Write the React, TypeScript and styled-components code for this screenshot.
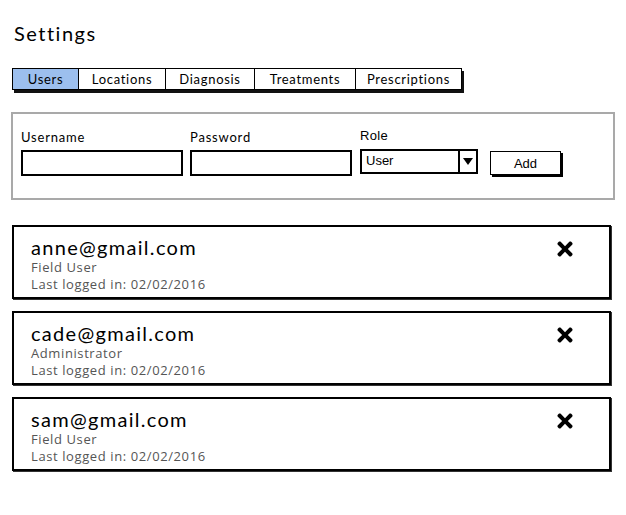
import React from "react";
import styled, { createGlobalStyle } from "styled-components";
import { FaTimes } from "react-icons/fa";

const Global = createGlobalStyle`
  html, body { margin: 0; padding: 0; background: #fff; }
  body { font-family: "Lato", "Liberation Sans", sans-serif; color: #000; }
`;

const Page = styled.div`
  width: 626px;
  height: 515px;
  box-sizing: border-box;
  padding: 21px 12px 0 12px;
  display: flex;
  flex-direction: column;
`;

const Title = styled.h1`
  margin: 0 0 0 2px;
  font-size: 20px;
  line-height: 24px;
  font-weight: 400;
  letter-spacing: 1.5px;
`;

const TabBar = styled.div`
  margin-top: 23px;
  display: flex;
  align-self: flex-start;
  border: 1.5px solid #000;
  box-shadow: 2px 3px 0 #111;
`;

const Tab = styled.div<{ $active?: boolean; $w: number }>`
  width: ${(p) => p.$w}px;
  height: 20px;
  box-sizing: border-box;
  display: flex;
  align-items: center;
  justify-content: center;
  font-size: 13px;
  letter-spacing: 0.7px;
  background: ${(p) => (p.$active ? "#9cbfee" : "#fff")};
  border-left: ${(p) => (p.$active ? "none" : "1.5px solid #000")};
`;

const Panel = styled.div`
  margin-top: 22px;
  margin-left: -1px;
  width: 604px;
  height: 88px;
  box-sizing: border-box;
  border: 2px solid #a9a9a9;
  padding: 14px 0 0 8px;
  display: flex;
  align-items: flex-end;
  gap: 7px;
`;

const Field = styled.div<{ $pb?: number }>`
  display: flex;
  flex-direction: column;
  gap: 5px;
  padding-bottom: ${(p) => p.$pb ?? 22}px;
`;

const Label = styled.label<{ $sans?: boolean }>`
  font-size: 13px;
  line-height: 16px;
  letter-spacing: ${(p) => (p.$sans ? "0.3px" : "0.8px")};
  margin-left: ${(p) => (p.$sans ? "1px" : "0")};
  font-family: ${(p) => (p.$sans ? '"Liberation Sans", Arial, sans-serif' : '"Lato", sans-serif')};
`;

const Input = styled.div`
  width: 162px;
  height: 26px;
  box-sizing: border-box;
  border: 2px solid #000;
  background: #fff;
`;

const Select = styled.div`
  margin-left: 1px;
  width: 118px;
  height: 25px;
  box-sizing: border-box;
  border: 2px solid #000;
  display: flex;
  align-items: stretch;
  font-family: "Liberation Sans", Arial, sans-serif;
  font-size: 13px;
`;

const SelectValue = styled.div`
  flex: 1;
  padding: 2px 4px;
`;

const SelectArrow = styled.div`
  width: 16px;
  border-left: 2px solid #000;
  display: flex;
  align-items: center;
  justify-content: center;
  &::after {
    content: "";
    border-left: 5px solid transparent;
    border-right: 5px solid transparent;
    border-top: 7px solid #000;
  }
`;

const Button = styled.div`
  margin-left: 5px;
  margin-bottom: 23px;
  width: 71px;
  height: 24px;
  box-sizing: border-box;
  border: 1.5px solid #000;
  box-shadow: 2px 2px 0 #000;
  display: flex;
  align-items: center;
  justify-content: center;
  font-family: "Liberation Sans", Arial, sans-serif;
  font-size: 13px;
`;

const List = styled.div`
  margin-top: 25px;
  display: flex;
  flex-direction: column;
  gap: 12px;
`;

const Card = styled.div`
  width: 599px;
  height: 74px;
  box-sizing: border-box;
  border: 2px solid #000;
  box-shadow: 1px 1px 0 #333;
  padding: 8px 0 0 17px;
  display: flex;
  justify-content: space-between;
`;

const Info = styled.div`
  display: flex;
  flex-direction: column;
`;

const Email = styled.div`
  font-size: 20px;
  line-height: 24px;
  letter-spacing: 1.3px;
`;

const Sub = styled.div`
  font-family: "Open Sans", "Liberation Sans", sans-serif;
  font-size: 13px;
  line-height: 17px;
  letter-spacing: 0.6px;
  color: #555;
`;

const Close = styled.div`
  padding: 3px 33px 0 0;
  font-size: 22px;
  line-height: 22px;
`;

const tabs = [
  { label: "Users", w: 65, active: true },
  { label: "Locations", w: 87 },
  { label: "Diagnosis", w: 89 },
  { label: "Treatments", w: 101 },
  { label: "Prescriptions", w: 106 },
];

const users = [
  { email: "anne@gmail.com", role: "Field User", last: "02/02/2016" },
  { email: "cade@gmail.com", role: "Administrator", last: "02/02/2016" },
  { email: "sam@gmail.com", role: "Field User", last: "02/02/2016" },
];

export default function App() {
  return (
    <>
      <Global />
      <Page>
        <Title>Settings</Title>
        <TabBar>
          {tabs.map((t) => (
            <Tab key={t.label} $active={t.active} $w={t.w}>
              {t.label}
            </Tab>
          ))}
        </TabBar>
        <Panel>
          <Field>
            <Label>Username</Label>
            <Input />
          </Field>
          <Field>
            <Label>Password</Label>
            <Input />
          </Field>
          <Field $pb={24}>
            <Label $sans>Role</Label>
            <Select>
              <SelectValue>User</SelectValue>
              <SelectArrow />
            </Select>
          </Field>
          <Button>Add</Button>
        </Panel>
        <List>
          {users.map((u) => (
            <Card key={u.email}>
              <Info>
                <Email>{u.email}</Email>
                <Sub>{u.role}</Sub>
                <Sub>Last logged in: {u.last}</Sub>
              </Info>
              <Close>
                <FaTimes />
              </Close>
            </Card>
          ))}
        </List>
      </Page>
    </>
  );
}
